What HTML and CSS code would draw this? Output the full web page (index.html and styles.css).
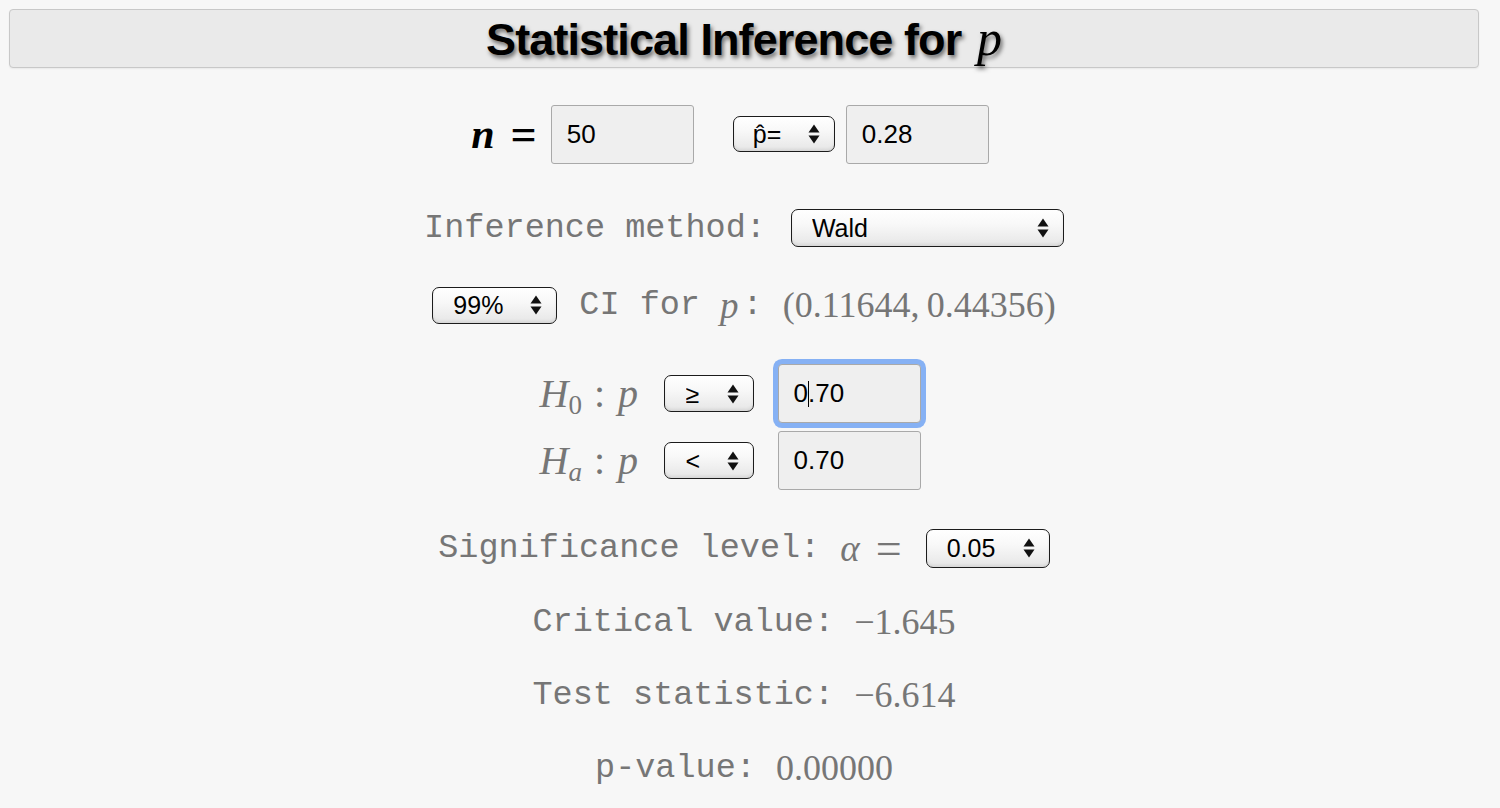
FILE: index.html
```html
<!DOCTYPE html>
<html lang="en">
<head>
<meta charset="utf-8">
<title>Statistical Inference for p</title>
<link rel="stylesheet" href="styles.css">
</head>
<body>
<header class="title-bar">
  <h1>Statistical Inference for <i class="mvar">p</i></h1>
</header>
<main class="panel">
  <div class="row row-n">
    <span class="n-eq"><i class="n-var">n</i><span class="n-sign">=</span></span>
    <input class="num n-input" type="text" value="50">
    <span class="sel sel-phat">
      <select><option>p̂=</option></select>
      <svg class="arrows" viewBox="0 0 12 20" aria-hidden="true"><path d="M6 0.5 L11.5 8.5 H0.5 Z M6 19.5 L11.5 11.5 H0.5 Z"/></svg>
    </span>
    <input class="num" type="text" value="0.28">
  </div>

  <div class="row row-method">
    <span class="mono">Inference method:</span>
    <span class="sel sel-method">
      <select><option>Wald</option></select>
      <svg class="arrows" viewBox="0 0 12 20" aria-hidden="true"><path d="M6 0.5 L11.5 8.5 H0.5 Z M6 19.5 L11.5 11.5 H0.5 Z"/></svg>
    </span>
  </div>

  <div class="row row-ci">
    <span class="sel sel-conf">
      <select><option>99%</option></select>
      <svg class="arrows" viewBox="0 0 12 20" aria-hidden="true"><path d="M6 0.5 L11.5 8.5 H0.5 Z M6 19.5 L11.5 11.5 H0.5 Z"/></svg>
    </span>
    <span class="mono">CI for </span><i class="math-i ci-p">p</i><span class="mono">: </span><span class="math">(0.11644,&thinsp;0.44356)</span>
  </div>

  <div class="hyp">
    <span class="hyp-label"><i>H</i><sub>0</sub><span class="colon">:</span><i>p</i></span>
    <span class="sel sel-op">
      <select><option>≥</option></select>
      <svg class="arrows" viewBox="0 0 12 20" aria-hidden="true"><path d="M6 0.5 L11.5 8.5 H0.5 Z M6 19.5 L11.5 11.5 H0.5 Z"/></svg>
    </span>
    <span class="focus-wrap">
      <input class="num focused" type="text" value="0.70">
      <span class="caret"></span>
    </span>

    <span class="hyp-label"><i>H</i><sub><i>a</i></sub><span class="colon">:</span><i>p</i></span>
    <span class="sel sel-op">
      <select><option>&lt;</option></select>
      <svg class="arrows" viewBox="0 0 12 20" aria-hidden="true"><path d="M6 0.5 L11.5 8.5 H0.5 Z M6 19.5 L11.5 11.5 H0.5 Z"/></svg>
    </span>
    <input class="num" type="text" value="0.70">
  </div>

  <div class="row row-sig">
    <span class="mono">Significance level: </span><i class="math-i alpha">α</i><span class="math eq">=</span>
    <span class="sel sel-alpha">
      <select><option>0.05</option></select>
      <svg class="arrows" viewBox="0 0 12 20" aria-hidden="true"><path d="M6 0.5 L11.5 8.5 H0.5 Z M6 19.5 L11.5 11.5 H0.5 Z"/></svg>
    </span>
  </div>

  <div class="row row-res row-crit">
    <span class="mono">Critical value: </span><span class="math">−1.645</span>
  </div>
  <div class="row row-res">
    <span class="mono">Test statistic: </span><span class="math">−6.614</span>
  </div>
  <div class="row row-res">
    <span class="mono">p-value: </span><span class="math">0.00000</span>
  </div>
</main>
</body>
</html>
```
FILE: styles.css
```css
html, body {
  margin: 0;
  padding: 0;
}

body {
  background: #f7f7f7;
  font-family: "Liberation Sans", Arial, sans-serif;
  color: #000;
}

.title-bar {
  margin: 9px 21px 0 9px;
  height: 57px;
  border: 1px solid #c8c8c8;
  border-radius: 4px;
  background: #eaeaea;
  display: flex;
  justify-content: center;
  align-items: center;
  box-shadow: 0 1px 2px rgba(0, 0, 0, 0.06);
}

.title-bar h1 {
  margin: 0;
  font-family: "Liberation Sans", Arial, sans-serif;
  font-weight: bold;
  font-size: 45px;
  line-height: 50px;
  letter-spacing: -0.9px;
  color: #000;
  text-shadow: 2px 3px 4px rgba(0, 0, 0, 0.55);
}

.title-bar .mvar {
  font-family: "Liberation Serif", "Times New Roman", serif;
  font-weight: normal;
  font-size: 50px;
  letter-spacing: 0;
  margin-left: 4px;
}

.panel {
  margin-right: 12px;
  display: flex;
  flex-direction: column;
  align-items: center;
}

.row {
  display: flex;
  align-items: center;
  height: 40px;
}

.mono {
  font-family: "Liberation Mono", "Courier New", monospace;
  font-size: 33.5px;
  color: #767676;
  white-space: pre;
}

.math {
  font-family: "Liberation Serif", "Times New Roman", serif;
  font-size: 36px;
  color: #767676;
  white-space: nowrap;
}

.math-i {
  font-family: "Liberation Serif", "Times New Roman", serif;
  font-style: italic;
  font-size: 37px;
  color: #767676;
}

/* inputs */
.num {
  box-sizing: border-box;
  width: 143px;
  height: 59px;
  margin: 0;
  padding: 0 15px;
  border: 1px solid #a9a9a9;
  border-radius: 3px;
  background: #efefef;
  font-family: "Liberation Sans", Arial, sans-serif;
  font-size: 26px;
  color: #000;
  outline: none;
}

.num.focused {
  box-shadow: 0 0 0 5px #86b1f4;
  border-radius: 4px;
}

.focus-wrap {
  position: relative;
  display: inline-block;
  width: 143px;
  height: 59px;
}

.caret {
  position: absolute;
  left: 30px;
  top: 17px;
  width: 1.5px;
  height: 26px;
  background: #000;
}

/* selects */
.sel {
  position: relative;
  display: inline-block;
}

.sel select {
  -webkit-appearance: none;
  appearance: none;
  box-sizing: border-box;
  width: 100%;
  height: 100%;
  margin: 0;
  padding: 0 0 0 20px;
  border: 1px solid #1c1c1c;
  border-radius: 7px;
  background: linear-gradient(#ffffff 0%, #f8f8f8 40%, #e6e6e6 100%);
  box-shadow: inset 0 -2px 3px rgba(0, 0, 0, 0.07);
  font-family: "Liberation Sans", Arial, sans-serif;
  font-size: 25px;
  color: #000;
  outline: none;
}

.sel .arrows {
  position: absolute;
  right: 15px;
  top: 50%;
  width: 12px;
  height: 20px;
  margin-top: -10px;
  fill: #111;
  pointer-events: none;
}

/* row 1 */
.row-n {
  margin-top: 36px;
  height: 60px;
  padding-right: 28px;
}

.n-eq {
  display: inline-flex;
  align-items: center;
  font-family: "Liberation Serif", "Times New Roman", serif;
  font-size: 42px;
  color: #000;
  margin-right: 14px;
}

.n-var {
  font-style: italic;
  font-weight: bold;
}

.n-sign {
  margin-left: 16px;
  font-size: 46px;
  font-weight: bold;
}

.sel-phat {
  width: 102px;
  height: 36px;
  margin: 0 11px 0 39px;
}

.sel-phat select {
  padding-left: 19px;
}

/* row 2 */
.row-method {
  margin-top: 44px;
}

.sel-method {
  width: 273px;
  height: 38px;
  margin-left: 25px;
}

/* row 3 */
.row-ci {
  margin-top: 37px;
}

.sel-conf {
  width: 125px;
  height: 37px;
  margin-right: 22px;
}

.ci-p {
  margin-right: 4px;
}

/* hypotheses */
.hyp {
  margin-top: 39px;
  padding-right: 28px;
  display: grid;
  grid-template-columns: 100px 90px 143px;
  grid-template-rows: 59px 59px;
  column-gap: 24px;
  row-gap: 8px;
  align-items: center;
}

.hyp-label {
  font-family: "Liberation Serif", "Times New Roman", serif;
  font-size: 40px;
  color: #767676;
  white-space: nowrap;
}

.hyp-label sub {
  font-size: 27px;
  vertical-align: -7px;
  line-height: 0;
}

.hyp-label .colon {
  margin: 0 13px 0 12px;
  font-style: normal;
}

.sel-op {
  width: 90px;
  height: 37px;
}

.sel-op select {
  padding-left: 21px;
}

/* significance */
.row-sig {
  margin-top: 38px;
}

.alpha {
  margin-right: 16px;
}

.eq {
  font-size: 46px;
}

.sel-alpha {
  width: 124px;
  height: 39px;
  margin-left: 24px;
}

/* results */
.row-res {
  margin-top: 33px;
}

.row-crit {
  margin-top: 34px;
}
```
